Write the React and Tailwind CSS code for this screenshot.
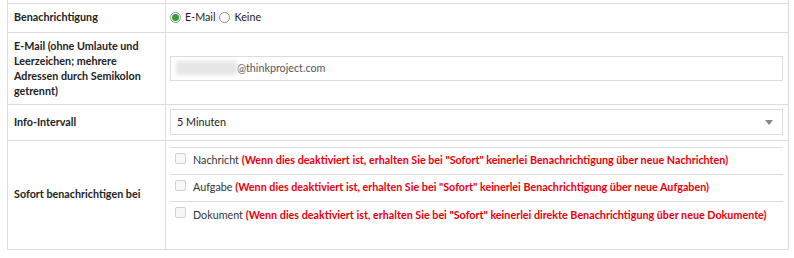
const items = [
  { name: 'Nachricht', note: '(Wenn dies deaktiviert ist, erhalten Sie bei "Sofort" keinerlei Benachrichtigung über neue Nachrichten)' },
  { name: 'Aufgabe', note: '(Wenn dies deaktiviert ist, erhalten Sie bei "Sofort" keinerlei Benachrichtigung über neue Aufgaben)' },
  { name: 'Dokument', note: '(Wenn dies deaktiviert ist, erhalten Sie bei "Sofort" keinerlei direkte Benachrichtigung über neue Dokumente)' },
];

function Radio({ checked }) {
  return (
    <span className="inline-flex w-[11px] h-[11px] rounded-full border border-[#8f8f8f] bg-white items-center justify-center">
      {checked && <span className="w-[7px] h-[7px] rounded-full bg-[#3a9a3a]" />}
    </span>
  );
}

export default function App() {
  return (
    <div className="bg-white w-[794px] h-[258px] overflow-hidden font-['Lato',sans-serif] text-[10.75px] text-[#222]">
      <table className="ml-[7px] w-[782px] border-collapse table-fixed">
        <colgroup>
          <col className="w-[158px]" />
          <col />
        </colgroup>
        <tbody>
          <tr className="h-[3px]">
            <td className="border-x border-b border-[#dcdcdc] p-0" />
            <td className="border-x border-b border-[#dcdcdc] p-0" />
          </tr>
          {/* Benachrichtigung */}
          <tr className="h-[29px]">
            <td className="border border-[#dcdcdc] px-[6px] font-bold align-middle">Benachrichtigung</td>
            <td className="border border-[#dcdcdc] px-[4px] align-middle">
              <div className="flex items-center gap-[4px]">
                <Radio checked />
                <span>E-Mail</span>
                <Radio />
                <span>Keine</span>
              </div>
            </td>
          </tr>
          {/* E-Mail */}
          <tr className="h-[72px]">
            <td className="border border-[#dcdcdc] px-[6px] py-[5px] font-bold leading-[15px] align-middle">
              E-Mail (ohne Umlaute und Leerzeichen; mehrere Adressen durch Semikolon getrennt)
            </td>
            <td className="border border-[#dcdcdc] pl-[4px] pr-[5px] align-middle">
              <div className="h-[25px] border border-[#dcdcdc] flex items-center px-[5px] text-[#555]">
                <span className="w-[61px] h-[14px] bg-[#e6e6e6] blur-[2px]" />
                <span>@thinkproject.com</span>
              </div>
            </td>
          </tr>
          {/* Info-Intervall */}
          <tr className="h-[36px]">
            <td className="border border-[#dcdcdc] px-[6px] font-bold align-middle">Info-Intervall</td>
            <td className="border border-[#dcdcdc] pl-[4px] pr-[5px] align-middle">
              <div className="h-[26px] border border-[#dcdcdc] flex items-center justify-between pl-[6px] pr-[9px]">
                <span>5 Minuten</span>
                <span className="w-0 h-0 border-x-[4px] border-x-transparent border-t-[5px] border-t-[#888]" />
              </div>
            </td>
          </tr>
          {/* Sofort */}
          <tr className="h-[109px]">
            <td className="border border-[#dcdcdc] px-[6px] font-bold align-middle">Sofort benachrichtigen bei</td>
            <td className="border border-[#dcdcdc] pl-[4px] pr-[5px] align-top pt-[6px]">
              <div className="border-t border-[#dcdcdc]">
                {items.map((it, i) => (
                  <div
                    key={it.name}
                    className={`h-[27px] flex items-center pl-[5px] ${i < items.length - 1 ? 'border-b border-[#dcdcdc]' : ''}`}
                  >
                    <span className="w-[11px] h-[11px] rounded-[2px] border border-[#cfcfcf] bg-[#f7f7f7] mr-[7px] -mt-[5px]" />
                    <span className="text-[#333]">{it.name}&nbsp;</span>
                    <span className="font-bold text-[#e8000b]">{it.note}</span>
                  </div>
                ))}
              </div>
            </td>
          </tr>
        </tbody>
      </table>
    </div>
  );
}
